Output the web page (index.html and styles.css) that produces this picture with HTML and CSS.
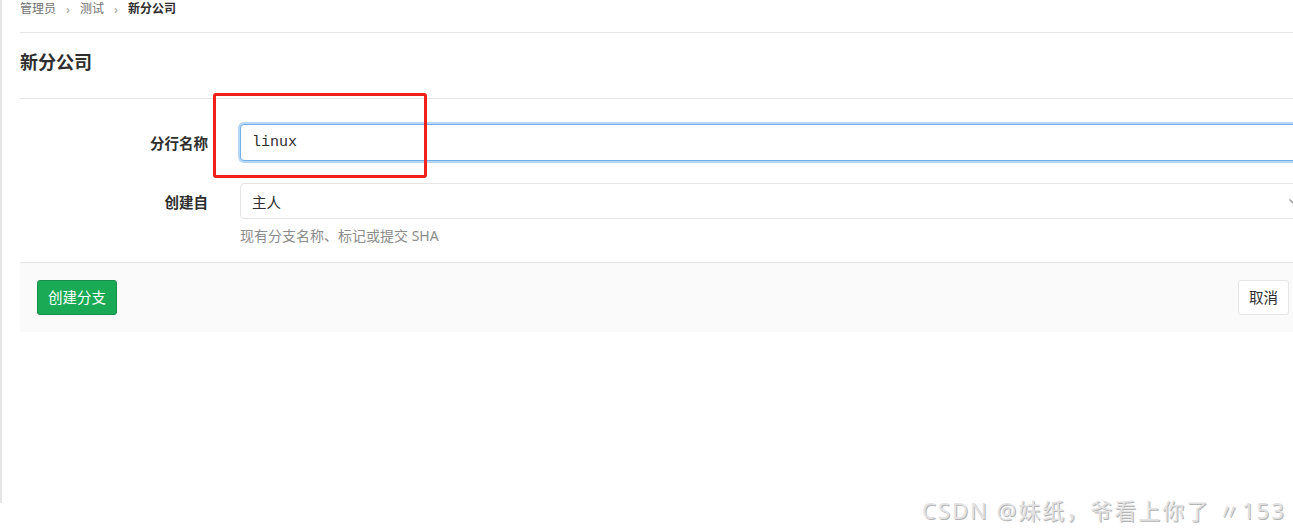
FILE: index.html
```html
<!DOCTYPE html>
<html lang="zh">
<head>
    <meta charset="UTF-8">
    <meta name="viewport" content="width=device-width, initial-scale=1.0">
    <title>新分公司</title>
    <link rel="stylesheet" href="styles.css">
</head>
<body>
    <div class="page">
        <div class="content">
            <div class="breadcrumbs">
                <span class="crumb">管理员</span>
                <span class="sep">›</span>
                <span class="crumb">测试</span>
                <span class="sep">›</span>
                <span class="crumb current">新分公司</span>
            </div>

            <h1 class="page-title">新分公司</h1>

            <form class="branch-form">
                <div class="form-row">
                    <label class="form-label">分行名称</label>
                    <div class="form-field">
                        <input class="form-input mono focused" type="text" value="linux">
                    </div>
                </div>
                <div class="form-row">
                    <label class="form-label">创建自</label>
                    <div class="form-field">
                        <div class="form-select">
                            <span>主人</span>
                            <svg class="caret" width="10" height="10" viewBox="0 0 10 10">
                                <path d="M1.5 3.5 L5 6.8 L8.5 3.5" fill="none" stroke="#9a9a9a" stroke-width="1.4"/>
                            </svg>
                        </div>
                        <p class="help">现有分支名称、标记或提交 SHA</p>
                    </div>
                </div>

                <div class="form-actions">
                    <button type="button" class="btn btn-create">创建分支</button>
                    <button type="button" class="btn btn-cancel">取消</button>
                </div>
            </form>
        </div>
        <div class="highlight"></div>
    </div>
    <div class="watermark">CSDN @妹纸，爷看上你了 〃153</div>
</body>
</html>
```

FILE: styles.css
```css
* {
    margin: 0;
    padding: 0;
    box-sizing: border-box;
    font-family: "Noto Sans", "Noto Sans CJK SC", sans-serif;
}

body {
    background-color: #ffffff;
    color: #2e2e2e;
    width: 1293px;
    height: 530px;
    overflow: hidden;
    position: relative;
}

.page {
    position: relative;
    height: 503px;
    border-left: 2px solid #e5e5e5;
}

.content {
    width: 1285px;
    margin-left: 18px;
}

/* Breadcrumbs */
.breadcrumbs {
    display: flex;
    align-items: center;
    gap: 10px;
    height: 33px;
    padding-bottom: 15px;
    border-bottom: 1px solid #e5e5e5;
    font-size: 12px;
    color: #707070;
    line-height: 16px;
}

.sep {
    color: #a0a0a0;
    font-size: 13px;
}

.crumb.current {
    color: #2e2e2e;
    font-weight: 700;
}

.page-title {
    font-size: 18px;
    font-weight: 700;
    line-height: 24px;
    padding: 17px 0 24px;
    border-bottom: 1px solid #e5e5e5;
}

/* Form */
.branch-form {
    padding-top: 25px;
}

.form-row {
    display: grid;
    grid-template-columns: 188px 1fr;
    column-gap: 32px;
    margin-bottom: 21px;
}

.form-label {
    text-align: right;
    font-size: 14.5px;
    font-weight: 700;
    line-height: 38px;
}

.form-input {
    display: block;
    width: 100%;
    height: 37px;
    padding: 0 11px;
    border: 1px solid #e5e5e5;
    border-radius: 4px;
    font-size: 15px;
    color: #2e2e2e;
    outline: none;
    background: #fff;
}

.form-input.mono {
    font-family: "Liberation Mono", "DejaVu Sans Mono", monospace;
}

.form-input.focused {
    border-color: #73afea;
    box-shadow: 0 0 0 2px #b8d6f6;
}

.form-select {
    display: flex;
    align-items: center;
    justify-content: space-between;
    height: 36px;
    padding: 0 6px 0 11px;
    border: 1px solid #e5e5e5;
    border-radius: 4px;
    font-size: 14.5px;
    color: #2e2e2e;
    background: #fff;
}

.help {
    margin-top: 7px;
    font-size: 14px;
    color: #8c8c8c;
    line-height: 20px;
}

.form-row:nth-child(2) {
    margin-bottom: 16px;
}

.form-actions {
    display: flex;
    justify-content: space-between;
    align-items: center;
    padding: 17px 16px 17px 17px;
    background-color: #fafafa;
    border-top: 1px solid #e5e5e5;
}

.btn {
    height: 35px;
    padding: 0 10px;
    border-radius: 3px;
    font-size: 14.5px;
    line-height: 33px;
    cursor: pointer;
}

.btn-create {
    background-color: #1aaa55;
    border: 1px solid #168f48;
    color: #ffffff;
}

.btn-cancel {
    background-color: #ffffff;
    border: 1px solid #e5e5e5;
    color: #2e2e2e;
}

/* Red annotation box */
.highlight {
    position: absolute;
    left: 211px;
    top: 93px;
    width: 214px;
    height: 85px;
    border: 3px solid #f2201c;
    border-radius: 3px;
}

.watermark {
    position: absolute;
    left: 922px;
    top: 493px;
    white-space: nowrap;
    font-size: 22px;
    font-weight: 400;
    color: #e2e2e2;
    letter-spacing: 2px;
    text-shadow: 1px 1px 0 #b4b4b4;
}
```
